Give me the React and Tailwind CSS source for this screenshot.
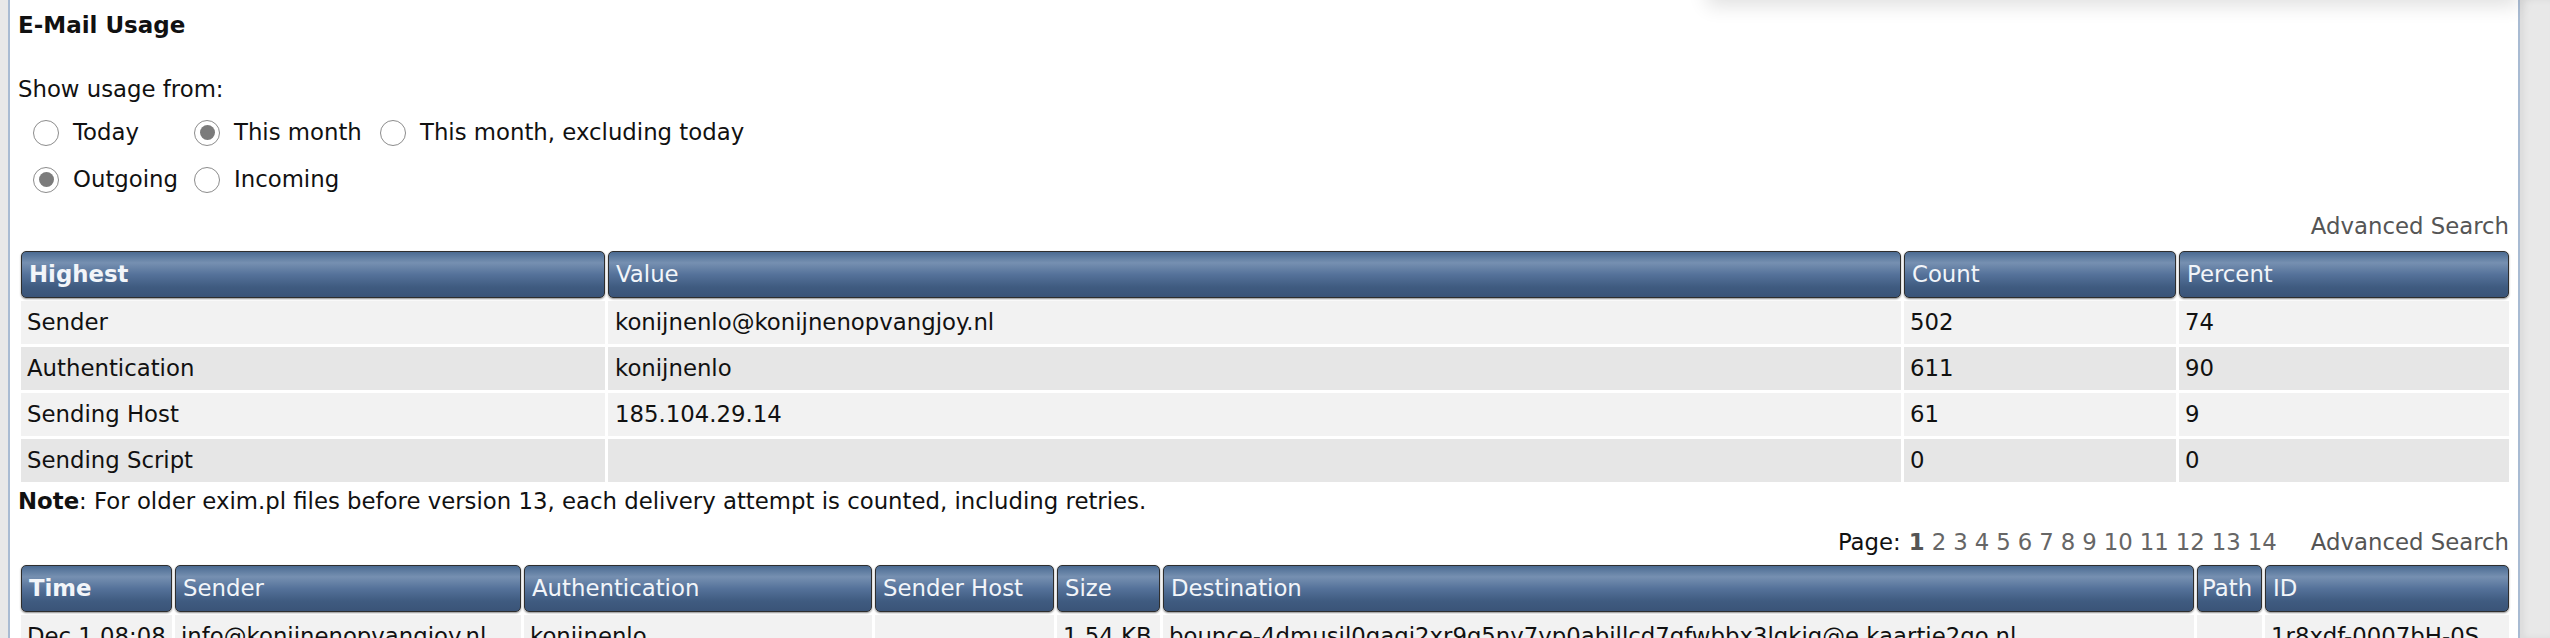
import React from "react";

const highest = [
  { label: "Sender", value: "konijnenlo@konijnenopvangjoy.nl", count: "502", percent: "74" },
  { label: "Authentication", value: "konijnenlo", count: "611", percent: "90" },
  { label: "Sending Host", value: "185.104.29.14", count: "61", percent: "9" },
  { label: "Sending Script", value: "", count: "0", percent: "0" },
];

const messages = [
  {
    time: "Dec 1 08:08",
    sender: "info@konijnenopvangjoy.nl",
    auth: "konijnenlo",
    host: "",
    size: "1.54 KB",
    dest: "bounce-4dmusil0qagi2xr9q5ny7yp0abillcd7gfwbbx3lqkig@e.kaartje2go.nl",
    path: "",
    id: "1r8xdf-0007bH-0S",
  },
];

const headCls =
  "h-[47px] px-[7px] text-left align-middle text-[#f2f5f9] font-normal rounded-[5px] border border-[#2e2e2e] shadow-[0_1px_2px_rgba(0,0,0,0.45)] bg-[linear-gradient(to_bottom,#4b6b92_0%,#7690b1_24%,#55729a_50%,#3f5b80_78%,#3a5478_100%)] whitespace-nowrap overflow-hidden";

// fake radio, the real ones are grey on this page
const Radio = ({ checked }) => (
  <span className="inline-flex w-[26px] h-[26px] rounded-full border border-[#8c8c8c] bg-white items-center justify-center shrink-0">
    {checked && <span className="w-[15px] h-[15px] rounded-full bg-[#7b7b7b]" />}
  </span>
);

const Option = ({ checked, label, width }) => (
  <div className={`flex items-center gap-[14px] ${width}`}>
    <Radio checked={checked} />
    <span>{label}</span>
  </div>
);

const App = () => {
  return (
    <div className="relative w-[2550px] h-[638px] overflow-hidden bg-[#e8e8e8] flex font-['DejaVu_Sans',Verdana,sans-serif] text-[22.8px] text-[#111]">
      <div className="w-[8px] shrink-0" />

      <div className="relative w-[2512px] shrink-0 bg-white border-l-2 border-r-2 border-[#a9bbd2] pl-[8px] pr-[3px]">
        {/* bottom edge of a popup above the page */}
        <div className="absolute left-[1697px] right-0 top-[-100px] h-[100px] bg-white shadow-[0_6px_18px_rgba(0,0,0,0.12)]" />

        <h1 className="pt-[11px] h-[39px] leading-[28px] text-[23px] font-bold">E-Mail Usage</h1>

        <div className="mt-[36px] leading-[28px]">Show usage from:</div>

        <div className="pl-[15px]">
          <div className="flex items-center h-[47px] mt-[6px]">
            <Option label="Today" width="w-[161px]" />
            <Option checked label="This month" width="w-[186px]" />
            <Option label="This month, excluding today" />
          </div>
          <div className="flex items-center h-[47px]">
            <Option checked label="Outgoing" width="w-[161px]" />
            <Option label="Incoming" />
          </div>
        </div>

        <div className="flex justify-end pr-[6px] h-[44px] items-center mt-[1px] text-[#555]">
          Advanced Search
        </div>

        <table className="table-fixed border-separate border-spacing-[3px] w-[2494px] mt-[0px]">
          <colgroup>
            <col className="w-[584px]" />
            <col className="w-[1293px]" />
            <col className="w-[272px]" />
            <col className="w-[330px]" />
          </colgroup>
          <thead>
            <tr>
              <th className={`${headCls} !font-bold`}>Highest</th>
              <th className={headCls}>Value</th>
              <th className={headCls}>Count</th>
              <th className={headCls}>Percent</th>
            </tr>
          </thead>
          <tbody>
            {highest.map((row, i) => (
              <tr key={row.label} className={i % 2 === 0 ? "bg-[#f2f2f2]" : "bg-[#e6e6e6]"}>
                <td className="h-[43px] px-[6px]">{row.label}</td>
                <td className="h-[43px] px-[7px]">{row.value}</td>
                <td className="h-[43px] px-[6px]">{row.count}</td>
                <td className="h-[43px] px-[6px]">{row.percent}</td>
              </tr>
            ))}
          </tbody>
        </table>

        <div className="h-[28px] leading-[28px] mt-[2px]">
          <b>Note</b>: For older exim.pl files before version 13, each delivery attempt is counted, including retries.
        </div>

        <div className="flex justify-end items-center pr-[6px] h-[28px] mt-[13px]">
          <span>Page:</span>
          <span className="ml-[8px] font-bold text-[#555]">1</span>
          <span className="ml-[7px] text-[#666] flex gap-[7px]">
            {["2", "3", "4", "5", "6", "7", "8", "9", "10", "11", "12", "13", "14"].map((p) => (
              <span key={p}>{p}</span>
            ))}
          </span>
          <span className="ml-[34px] text-[#555]">Advanced Search</span>
        </div>

        <table className="table-fixed border-separate border-spacing-[3px] w-[2494px] mt-[6px]">
          <colgroup>
            <col className="w-[151px]" />
            <col className="w-[346px]" />
            <col className="w-[348px]" />
            <col className="w-[179px]" />
            <col className="w-[103px]" />
            <col className="w-[1031px]" />
            <col className="w-[65px]" />
            <col className="w-[244px]" />
          </colgroup>
          <thead>
            <tr>
              <th className={`${headCls} !font-bold`}>Time</th>
              <th className={headCls}>Sender</th>
              <th className={headCls}>Authentication</th>
              <th className={headCls}>Sender Host</th>
              <th className={headCls}>Size</th>
              <th className={headCls}>Destination</th>
              <th className={`${headCls} !px-[4px]`}>Path</th>
              <th className={headCls}>ID</th>
            </tr>
          </thead>
          <tbody>
            {messages.map((m) => (
              <tr key={m.id} className="bg-[#f2f2f2]">
                <td className="h-[43px] px-[6px] whitespace-nowrap overflow-hidden">{m.time}</td>
                <td className="h-[43px] px-[6px] whitespace-nowrap overflow-hidden">{m.sender}</td>
                <td className="h-[43px] px-[6px]">{m.auth}</td>
                <td className="h-[43px] px-[6px]">{m.host}</td>
                <td className="h-[43px] px-[6px] whitespace-nowrap overflow-hidden">{m.size}</td>
                <td className="h-[43px] px-[6px] whitespace-nowrap overflow-hidden">{m.dest}</td>
                <td className="h-[43px] px-[6px]">{m.path}</td>
                <td className="h-[43px] px-[6px] whitespace-nowrap">{m.id}</td>
              </tr>
            ))}
          </tbody>
        </table>
      </div>

      <div className="flex-1 shadow-[inset_4px_0_6px_rgba(0,0,0,0.06)]" />
    </div>
  );
};

export default App;
